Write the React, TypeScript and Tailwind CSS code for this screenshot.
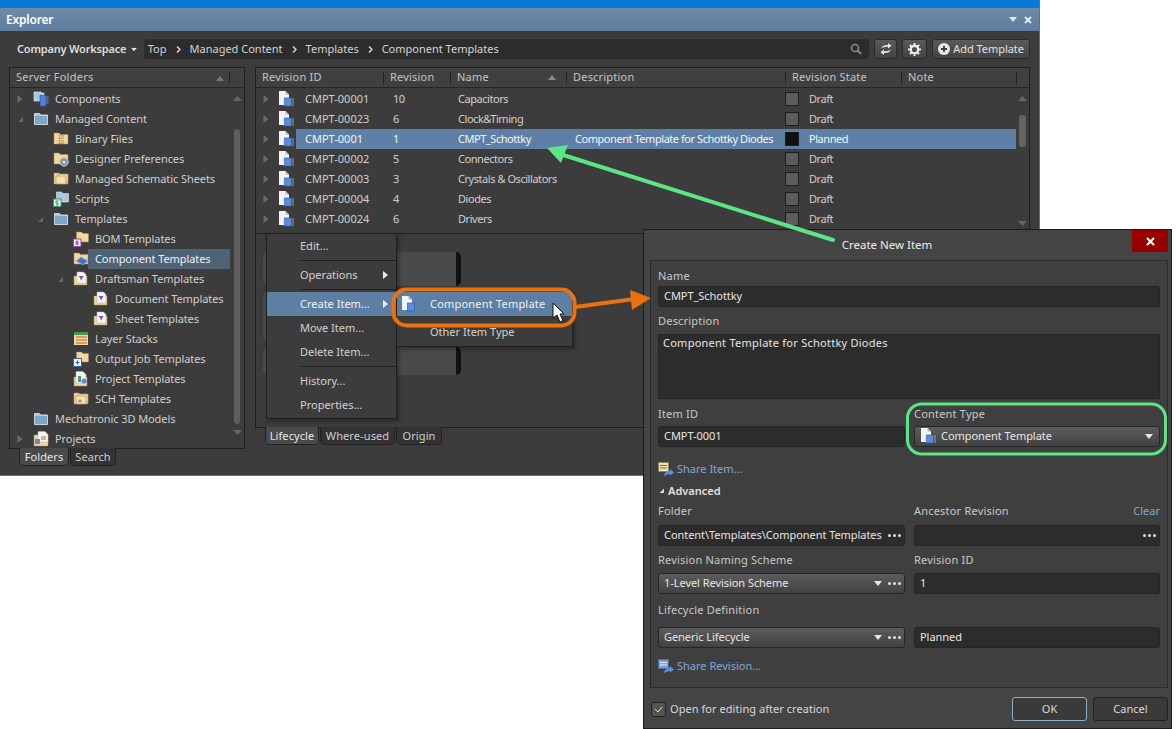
import type { ReactNode } from "react";

/* ================= ICONS ================= */

function DocChip({ small = false }: { small?: boolean }) {
  return (
    <svg width="16" height="17" viewBox="0 0 16 17" className="shrink-0">
      <path d="M1 0h6.500L11 3.500V14H1z" fill="#f2f4f6" />
      <path d="M7.500 0v3.500H11z" fill="#aeb6bf" />
      <rect x="6.500" y="7" width="7" height="8" fill="#5b8be0" stroke="#2f5db0" strokeWidth="0.7" />
      {!small && <path d="M14 8h2M14 10h2M14 12h2M14 14h2M5 8h1.500M5 10h1.500M5 12h1.500M5 14h1.500" stroke="#b9c7dd" strokeWidth="0.7" />}
    </svg>
  );
}

function TanFolder({ children }: { children?: ReactNode }) {
  return (
    <svg width="16" height="16" viewBox="0 0 16 16" className="shrink-0">
      <path d="M1 2h5l1.500 1.500H15V13H1z" fill="#f0d79e" stroke="#a88b52" strokeWidth="0.5" />
      {children}
    </svg>
  );
}

function BlueFolder() {
  return (
    <svg width="16" height="16" viewBox="0 0 16 16" className="shrink-0">
      <path d="M1.500 2.500h5L8 4h6.500v9.500h-13z" fill="#a9c6dc" stroke="#dfe9f1" strokeWidth="0.8" />
      <path d="M2 5h12v8H2z" fill="#7ea7c6" />
    </svg>
  );
}

function TreeIcon({ kind }: { kind: string }) {
  if (kind === "blue") return <BlueFolder />;
  if (kind === "components")
    return (
      <svg width="16" height="16" viewBox="0 0 16 16" className="shrink-0">
        <path d="M1 1h7l1 1h2v8H1z" fill="#a9c6dc" stroke="#dfe9f1" strokeWidth="0.6" />
        <rect x="7" y="4.500" width="6" height="10.500" fill="#4f7fe0" stroke="#2b57aa" strokeWidth="0.7" />
        <path d="M13.500 6h2M13.500 8h2M13.500 10h2M13.500 12h2" stroke="#b5c2d6" strokeWidth="0.7" />
      </svg>
    );
  if (kind === "binary")
    return (
      <TanFolder>
        <text x="8" y="7.500" fontSize="5" fontFamily="Liberation Sans" fill="#8a6a2d" textAnchor="middle">10</text>
        <text x="8" y="12.500" fontSize="5" fontFamily="Liberation Sans" fill="#8a6a2d" textAnchor="middle">10</text>
      </TanFolder>
    );
  if (kind === "prefs")
    return (
      <TanFolder>
        <circle cx="11" cy="11" r="4.200" fill="#8a8f94" stroke="#c7ccd0" strokeWidth="1" />
        <circle cx="11" cy="11" r="1.600" fill="#d8dcdf" />
      </TanFolder>
    );
  if (kind === "sheets" || kind === "sch")
    return (
      <TanFolder>
        <path d="M5 3h10v8H5z" fill="#f5dfae" stroke="#a88b52" strokeWidth="0.6" />
        <path d="M3 5h10v8H3z" fill="#f5dfae" stroke="#a88b52" strokeWidth="0.6" />
        {kind === "sch" && <path d="M5 11l2-3 2 3z" fill="#6b83c4" />}
      </TanFolder>
    );
  if (kind === "scripts")
    return (
      <svg width="16" height="16" viewBox="0 0 16 16" className="shrink-0">
        <path d="M3.500 1h5L10 2.500h5.500V11h-12z" fill="#a9c6dc" stroke="#dfe9f1" strokeWidth="0.6" />
        <rect x="0.500" y="8" width="7.500" height="7.500" fill="#f5f7f5" stroke="#2f9a63" strokeWidth="1" />
        <path d="M5.800 10H3v2h2v2H2.500" fill="none" stroke="#2f8a5a" strokeWidth="1" />
      </svg>
    );
  if (kind === "bom")
    return (
      <svg width="16" height="16" viewBox="0 0 16 16" className="shrink-0">
        <path d="M3.500 1h5L10 2.500h5.500V11h-12z" fill="#f0d79e" stroke="#a88b52" strokeWidth="0.5" />
        <rect x="0.500" y="8" width="7.500" height="7.500" fill="#f7f3fa" stroke="#9a3fb0" strokeWidth="1" />
        <path d="M3 10v3.500h2V12H3h2v-2z" fill="none" stroke="#8a3aa2" strokeWidth="0.8" />
      </svg>
    );
  if (kind === "comp")
    return (
      <TanFolder>
        <path d="M3 10l5-4 7 4-5 4z" fill="#4f7fd0" stroke="#86a6dd" strokeWidth="0.5" />
        <path d="M6 10h6M8 8l3 4" stroke="#2d5aa5" strokeWidth="0.6" />
      </TanFolder>
    );
  if (kind === "draft")
    return (
      <svg width="16" height="16" viewBox="0 0 16 16" className="shrink-0">
        <path d="M1 5h13v9H1z" fill="#f0d79e" stroke="#a88b52" strokeWidth="0.5" />
        <path d="M4 1h6.500L13 3.500V12H4z" fill="#f4f5f7" stroke="#b0b5bb" strokeWidth="0.5" />
        <path d="M5.500 5h5l-2.500 4.500-1-2.500z" fill="#8a4bb5" />
      </svg>
    );
  if (kind === "layers")
    return (
      <svg width="16" height="16" viewBox="0 0 16 16" className="shrink-0">
        <path d="M1 1h14v13H1z" fill="#f0d79e" />
        <path d="M1 1h14v3H1z" fill="#3e9a4e" />
        <path d="M3 6h11M3 9h11M3 12h11" stroke="#c2612e" strokeWidth="1" />
      </svg>
    );
  if (kind === "job")
    return (
      <svg width="16" height="16" viewBox="0 0 16 16" className="shrink-0">
        <path d="M3.500 1h5L10 2.500h5.500V11h-12z" fill="#f0d79e" stroke="#a88b52" strokeWidth="0.5" />
        <rect x="0.500" y="7.500" width="8" height="8" fill="#f5f7fb" stroke="#2c62c0" strokeWidth="1" />
        <path d="M4.500 9.500v4M2.500 11.500h4" stroke="#2c62c0" strokeWidth="1.200" />
      </svg>
    );
  if (kind === "project")
    return (
      <svg width="16" height="16" viewBox="0 0 16 16" className="shrink-0">
        <path d="M1 6h13v9H1z" fill="#f0d79e" stroke="#a88b52" strokeWidth="0.5" />
        <path d="M3 0.500h7L13 3.500V12H3z" fill="#f4f5f7" stroke="#b0b5bb" strokeWidth="0.5" />
        <path d="M5 5h3v6H5z" fill="#4f9a6a" />
        <circle cx="11" cy="10" r="2.500" fill="#5b8be0" />
      </svg>
    );
  return (
    <svg width="17" height="16" viewBox="0 0 17 16" className="shrink-0">
      <path d="M1 4h14v11H1z" fill="#f0d79e" stroke="#a88b52" strokeWidth="0.5" />
      <path d="M5 0.500h7L15 3.500V11H5z" fill="#f4f5f7" stroke="#b0b5bb" strokeWidth="0.5" />
      <rect x="2" y="8" width="5" height="5" fill="#5b8be0" />
      <path d="M8 6h5M8 8h5" stroke="#c2612e" strokeWidth="1" />
    </svg>
  );
}

function Arrow({ open }: { open?: boolean }) {
  return open ? (
    <svg width="10" height="10" viewBox="0 0 10 10"><path d="M8 3v5H3z" fill="#666" /></svg>
  ) : (
    <svg width="10" height="10" viewBox="0 0 10 10"><path d="M2.500 1l5 4-5 4z" fill="#6a6a6a" /></svg>
  );
}

function Dots() {
  return <span className="flex gap-[2px] shrink-0">
    <i className="w-[3px] h-[3px] rounded-full bg-[#e0e0e0]" />
    <i className="w-[3px] h-[3px] rounded-full bg-[#e0e0e0]" />
    <i className="w-[3px] h-[3px] rounded-full bg-[#e0e0e0]" />
  </span>;
}

function Caret({ className = "" }: { className?: string }) {
  return <svg width="8" height="5" viewBox="0 0 8 5" className={className}><path d="M0 0h8L4 5z" fill="#e6e6e6" /></svg>;
}

function Crumb() {
  return <svg width="5" height="7" viewBox="0 0 5 7" className="mx-[9px]"><path d="M1 0.500L4 3.500L1 6.500" fill="none" stroke="#d8d8d8" strokeWidth="1.500" /></svg>;
}

/* ================= EXPLORER ================= */

const indent = ["ml-[5px]", "ml-[25px]", "ml-[45px]", "ml-[65px]"];

const tree = [
  { label: "Components", level: 0, icon: "components", arrow: "closed" },
  { label: "Managed Content", level: 0, icon: "blue", arrow: "open" },
  { label: "Binary Files", level: 1, icon: "binary" },
  { label: "Designer Preferences", level: 1, icon: "prefs" },
  { label: "Managed Schematic Sheets", level: 1, icon: "sheets" },
  { label: "Scripts", level: 1, icon: "scripts" },
  { label: "Templates", level: 1, icon: "blue", arrow: "open" },
  { label: "BOM Templates", level: 2, icon: "bom" },
  { label: "Component Templates", level: 2, icon: "comp", selected: true },
  { label: "Draftsman Templates", level: 2, icon: "draft", arrow: "open" },
  { label: "Document Templates", level: 3, icon: "draft" },
  { label: "Sheet Templates", level: 3, icon: "draft" },
  { label: "Layer Stacks", level: 2, icon: "layers" },
  { label: "Output Job Templates", level: 2, icon: "job" },
  { label: "Project Templates", level: 2, icon: "project" },
  { label: "SCH Templates", level: 2, icon: "sch" },
  { label: "Mechatronic 3D Models", level: 0, icon: "blue" },
  { label: "Projects", level: 0, icon: "projects", arrow: "closed" },
];

const revisions = [
  ["CMPT-00001", "10", "Capacitors", "", "Draft"],
  ["CMPT-00023", "6", "Clock&Timing", "", "Draft"],
  ["CMPT-0001", "1", "CMPT_Schottky", "Component Template for Schottky Diodes", "Planned"],
  ["CMPT-00002", "5", "Connectors", "", "Draft"],
  ["CMPT-00003", "3", "Crystals & Oscillators", "", "Draft"],
  ["CMPT-00004", "4", "Diodes", "", "Draft"],
  ["CMPT-00024", "6", "Drivers", "", "Draft"],
];

function Tab({ children, active, className = "" }: { children: ReactNode; active?: boolean; className?: string }) {
  return (
    <div className={`h-[18px] pt-[2px] flex items-center justify-center rounded-b-[5px] border border-t-0 border-[#222] ${active ? "bg-[#4a4a4a] text-[#e8e8e8]" : "bg-[#333] text-[#cfcfcf]"} ${className}`}>
      {children}
    </div>
  );
}

function ToolButton({ children, className = "" }: { children: ReactNode; className?: string }) {
  return (
    <div className={`h-[20px] flex items-center justify-center rounded-[3px] border border-[#2a2a2a] bg-gradient-to-b from-[#5a5a5a] to-[#424242] text-[#e4e4e4] ${className}`}>
      {children}
    </div>
  );
}

function ServerFolders() {
  return (
    <div className="w-[236px] flex flex-col">
      <div className="h-[382px] border border-[#1f1f1f] flex flex-col">
        <div className="h-[20px] shrink-0 flex items-center pl-[6px] border-b border-[#262626] bg-[#404040] text-[#c4c4c4] relative tracking-[0.25px]">
          Server Folders
          <svg width="8" height="5" viewBox="0 0 8 5" className="absolute left-[206px] top-[8px]"><path d="M0 5h8L4 0z" fill="#777" /></svg>
          <span className="absolute left-[219px] top-[4px] w-px h-[11px] bg-[#222]" />
        </div>
        <div className="flex flex-1 pt-[1px]">
          <div className="w-[220px]">
            {tree.map((row) => (
              <div key={row.label} className="h-5 flex items-center">
                <span className={`w-[10px] shrink-0 flex ${indent[row.level]}`}>
                  {row.arrow && <Arrow open={row.arrow === "open"} />}
                </span>
                <span className="ml-[8px] w-[16px] shrink-0 flex"><TreeIcon kind={row.icon} /></span>
                <span className={`flex-1 h-5 flex items-center tracking-[-0.08px] ${row.selected ? "bg-[#4f6377] -ml-[1px] pl-[7px] text-[#eef1f4]" : "pl-[6px] text-[#cfcfcf]"}`}>
                  {row.label}
                </span>
              </div>
            ))}
          </div>
          <div className="flex-1 flex flex-col items-center relative">
            <svg width="9" height="5" viewBox="0 0 9 5" className="mt-[7px]"><path d="M0 5h9L4.500 0z" fill="#666" /></svg>
            <div className="w-[6px] h-[295px] mt-[28px] rounded-[3px] bg-[#5e5e5e]" />
            <svg width="9" height="5" viewBox="0 0 9 5" className="mt-[6px]"><path d="M0 0h9L4.500 5z" fill="#666" /></svg>
          </div>
        </div>
      </div>
      <div className="flex pl-[10px] -mt-px gap-px">
        <Tab active className="w-[50px]">Folders</Tab>
        <Tab className="w-[46px]">Search</Tab>
      </div>
    </div>
  );
}

function RevisionTable() {
  const head = [
    ["Revision ID", "w-[128px]"],
    ["Revision", "w-[67px]"],
    ["Name", "w-[116px]"],
    ["Description", "w-[219px]"],
    ["Revision State", "w-[116px]"],
    ["Note", "w-[115px]"],
  ];
  return (
    <div className="h-[167px] border border-[#1f1f1f] flex flex-col overflow-hidden">
      <div className="h-[20px] shrink-0 flex items-center border-b border-[#262626] bg-[#404040] text-[#c4c4c4] tracking-[0.2px]">
        {head.map(([label, width]) => (
          <div key={label} className={`${width} h-[12px] flex items-center pl-[6px] border-r border-[#222] relative`}>
            {label}
            {label === "Name" && <svg width="8" height="5" viewBox="0 0 8 5" className="absolute left-[97px] top-[3px]"><path d="M0 5h8L4 0z" fill="#8a8a8a" /></svg>}
          </div>
        ))}
      </div>
      <div className="flex flex-1 pt-[1px]">
        <div className="w-[760px] shrink-0">
          {revisions.map(([id, rev, name, desc, state]) => {
            const sel = state === "Planned";
            return (
              <div key={id} className="h-5 flex items-center">
                <span className="ml-[5px] w-[10px] flex"><Arrow /></span>
                <span className="ml-[7px] w-[16px] flex"><DocChip /></span>
                <div className={`ml-[2px] flex-1 h-5 flex items-center tracking-[-0.45px] ${sel ? "bg-[#5f80a6] text-[#f2f4f7]" : "text-[#d0d0d0]"}`}>
                  <span className="w-[87px] pl-[9px] tracking-[0px]">{id}</span>
                  <span className="w-[67px] pl-[10px]">{rev}</span>
                  <span className="w-[116px] pl-[8px]">{name}</span>
                  <span className="w-[219px] pl-[9px] whitespace-nowrap">{desc}</span>
                  <span className={`w-[14px] h-[14px] border border-[#1b1b1b] ${sel ? "bg-[#101010]" : "bg-[#5c5c5c]"}`} />
                  <span className="ml-[10px]">{state}</span>
                </div>
              </div>
            );
          })}
        </div>
        <div className="flex-1 flex flex-col items-center">
          <svg width="9" height="5" viewBox="0 0 9 5" className="mt-[7px]"><path d="M0 5h9L4.500 0z" fill="#666" /></svg>
          <div className="w-[7px] h-[32px] mt-[14px] rounded-[3px] bg-[#636363]" />
          <svg width="9" height="5" viewBox="0 0 9 5" className="mt-[74px]"><path d="M0 0h9L4.500 5z" fill="#666" /></svg>
        </div>
      </div>
    </div>
  );
}

function LifecyclePane() {
  return (
    <div className="flex flex-col">
      <div className="h-[194px] border border-t-0 border-[#1f1f1f] pl-[7px] pt-[18px] flex flex-col gap-[5px]">
        <div className="w-[198px] h-[34px] rounded-[5px] bg-[#4a4a4a] border-r-[5px] border-[#111]" />
        <div className="w-[198px] h-[51px] rounded-[5px] bg-[#4a4a4a]" />
        <div className="w-[198px] h-[28px] rounded-[5px] bg-[#4a4a4a] border-r-[5px] border-[#111]" />
      </div>
      <div className="flex pl-[10px] -mt-px gap-px">
        <Tab active className="w-[54px]">Lifecycle</Tab>
        <Tab className="w-[75px]">Where-used</Tab>
        <Tab className="w-[46px]">Origin</Tab>
      </div>
    </div>
  );
}

function Explorer() {
  return (
    <div className="absolute left-0 top-0 w-[1040px] h-[476px] flex flex-col border-r border-b border-[#2f7fc0] tracking-[0.1px]">
      <div className="h-2 bg-[#0a78d6] shrink-0" />
      <div className="h-[23px] shrink-0 flex items-center justify-between pl-[6px] pr-[7px] bg-gradient-to-b from-[#6d8aa9] to-[#5d7d9f] text-white font-semibold text-[12px] tracking-[-0.2px]">
        Explorer
        <div className="flex items-center gap-[7px]">
          <Caret />
          <svg width="8" height="8" viewBox="0 0 8 8"><path d="M1 1l6 6M7 1l-6 6" stroke="#e8eef4" strokeWidth="1.800" /></svg>
        </div>
      </div>
      <div className="flex-1 bg-[#3c3c3c] px-[9px] pt-[8px] flex flex-col gap-[8px]">
        <div className="h-[20px] flex items-center shrink-0">
          <span className="w-[121px] pl-[8px] font-semibold text-[#dedede] whitespace-nowrap tracking-[-0.2px]">Company Workspace</span>
          <Caret className="scale-75" />
          <div className="ml-[6px] w-[727px] h-[20px] flex items-center justify-between rounded-[3px] bg-[#2c2c2c] pl-[4px] pr-[7px] text-[#d4d4d4]">
            <div className="flex items-center tracking-[0px]">
              <span>Top</span><Crumb />
              <span>Managed Content</span><Crumb />
              <span>Templates</span><Crumb />
              <span>Component Templates</span>
            </div>
            <svg width="12" height="12" viewBox="0 0 12 12"><circle cx="5" cy="5" r="3.500" fill="none" stroke="#8a8a8a" strokeWidth="1.500" /><path d="M7.500 7.500l3.500 3.500" stroke="#8a8a8a" strokeWidth="2" /></svg>
          </div>
          <ToolButton className="ml-[5px] w-[23px]">
            <svg width="12" height="14" viewBox="0 0 12 14"><path d="M1.500 6.500C2 3.500 5 3 8 3V1l3.500 2.800L8 6.500V4.800C5.500 4.800 3.500 5 1.500 6.500zM10.500 7.500C10 10.500 7 11 4 11v2L0.500 10.200 4 7.500v1.700C6.500 9.200 8.500 9 10.500 7.500z" fill="#e6e6e6" /></svg>
          </ToolButton>
          <ToolButton className="ml-[5px] w-[25px]">
            <svg width="13" height="13" viewBox="0 0 13 13"><circle cx="6.500" cy="6.500" r="3.700" fill="none" stroke="#ececec" strokeWidth="2.300" /><path d="M6.500 0v2.500M6.500 10.500V13M0 6.500h2.500M10.500 6.500H13M1.900 1.900l1.800 1.800M9.300 9.300l1.800 1.800M11.100 1.900L9.300 3.700M3.700 9.300l-1.800 1.800" stroke="#ececec" strokeWidth="2" /></svg>
          </ToolButton>
          <ToolButton className="ml-[5px] w-[98px] gap-[3px]">
            <svg width="12" height="12" viewBox="0 0 12 12"><circle cx="6" cy="6" r="6" fill="#e8e8e8" /><path d="M6 3v6M3 6h6" stroke="#3c3c3c" strokeWidth="1.800" /></svg>
            <span className="tracking-[-0.05px]">Add Template</span>
          </ToolButton>
        </div>
        <div className="flex gap-[10px]">
          <ServerFolders />
          <div className="w-[775px] flex flex-col">
            <RevisionTable />
            <LifecyclePane />
          </div>
        </div>
      </div>
    </div>
  );
}

/* ================= CONTEXT MENU ================= */

function MenuItem({ label, sub, active }: { label: string; sub?: boolean; active?: boolean }) {
  return (
    <div className={`h-[24px] flex items-center justify-between pl-[33px] pr-[8px] ${active ? "bg-[#5d7fa3] text-[#f0f3f6]" : "text-[#d2d2d2]"}`}>
      {label}
      {sub && <svg width="5" height="8" viewBox="0 0 5 8"><path d="M0 0l5 4-5 4z" fill="#eee" /></svg>}
    </div>
  );
}

function Sep() {
  return <div className="h-px ml-[34px] bg-[#1f1f1f] my-[2px]" />;
}

function ContextMenu() {
  return (
    <>
      <div className="absolute left-[266px] top-[233px] w-[131px] h-[186px] bg-[#3c3c3c] border border-[#1f1f1f] tracking-[0px] shadow-[2px_2px_4px_rgba(0,0,0,0.35)]">
        <MenuItem label="Edit..." />
        <Sep />
        <MenuItem label="Operations" sub />
        <Sep />
        <MenuItem label="Create Item..." sub active />
        <MenuItem label="Move Item..." />
        <MenuItem label="Delete Item..." />
        <Sep />
        <MenuItem label="History..." />
        <MenuItem label="Properties..." />
      </div>
      <div className="absolute left-[396px] top-[291px] w-[177px] h-[56px] bg-[#3c3c3c] border border-[#1f1f1f] tracking-[0px] shadow-[2px_2px_4px_rgba(0,0,0,0.35)]">
        <div className="h-[24px] flex items-center bg-[#5d7fa3] text-[#f0f3f6] pl-[4px]">
          <DocChip small />
          <span className="ml-[13px] tracking-[0.2px]">Component Template</span>
        </div>
        <div className="h-[30px] pt-[3px] flex items-center pl-[33px] text-[#d2d2d2]">Other Item Type</div>
      </div>
    </>
  );
}

/* ================= DIALOG ================= */

function Label({ children, className = "" }: { children: ReactNode; className?: string }) {
  return <div className={`text-[#c9c9c9] leading-[14px] tracking-[0.2px] ${className}`}>{children}</div>;
}

function Field({ children, className = "", select }: { children?: ReactNode; className?: string; select?: boolean }) {
  return (
    <div className={`h-[21px] flex items-center justify-between rounded-[3px] pl-[5px] pr-[3px] text-[#e6e6e6] tracking-[-0.05px] border border-[#262626] ${select ? "bg-gradient-to-b from-[#5c5c5c] to-[#424242]" : "bg-[#2c2c2c]"} ${className}`}>
      {children}
    </div>
  );
}

function SelectEnd() {
  return (
    <span className="flex items-center gap-[6px]">
      <Caret />
      <Dots />
    </span>
  );
}

function ShareIcon({ grid }: { grid?: boolean }) {
  return (
    <svg width="16" height="15" viewBox="0 0 16 15" className="shrink-0">
      <rect x="0.500" y="0.500" width="10" height="9" fill={grid ? "#7d9fd8" : "#f0e3b8"} stroke={grid ? "#4a6eb0" : "#8a7a4f"} strokeWidth="0.6" />
      <path d="M2 3.500h7M2 6h7" stroke={grid ? "#e8eefa" : "#7a6a3f"} strokeWidth="1" />
      <path d="M6 14c0-3 3-5 6-5V7l4 3.500-4 3V12c-2 0-4 1-6 2z" fill="#5a93dc" />
    </svg>
  );
}

function CreateDialog() {
  return (
    <div className="absolute left-[643px] top-[229px] w-[529px] h-[500px] bg-[#444444] border border-[#1c1c1c] flex flex-col">
      <div className="h-[30px] shrink-0 relative flex justify-center items-center pr-[41px] text-[#ececec] text-[11.5px] tracking-[0px]">
        Create New Item
        <div className="absolute left-[488px] top-[0px] w-[36px] h-[22px] bg-[#980000] flex items-center justify-center">
          <svg width="9" height="9" viewBox="0 0 9 9"><path d="M1 1l7 7M8 1l-7 7" stroke="#fff" strokeWidth="2" /></svg>
        </div>
      </div>
      <div className="mx-[6px] w-[518px] h-[428px] shrink-0 bg-[#3f3f3f] border border-[#2b2b2b] px-[7px] pt-[8px] flex flex-col">
        <Label>Name</Label>
        <Field className="mt-[3px]">CMPT_Schottky</Field>
        <Label className="mt-[7px]">Description</Label>
        <div className="mt-[6px] h-[65px] shrink-0 bg-[#2c2c2c] border border-[#262626] pl-[4px] pt-[1px] leading-[14px] tracking-[0.25px] text-[#e6e6e6]">Component Template for Schottky Diodes</div>
        <div className="mt-[8px] grid grid-cols-[247px_246px] gap-x-[9px]">
          <Label>Item ID</Label>
          <Label>Content Type</Label>
          <Field className="mt-[5px]">CMPT-0001</Field>
          <Field select className="mt-[5px] pr-[6px]">
            <span className="flex items-center gap-[5px]"><DocChip />Component Template</span>
            <Caret />
          </Field>
        </div>
        <div className="mt-[14px] h-[16px] flex items-center gap-[3px] text-[#7fa8d6]"><ShareIcon />Share Item...</div>
        <div className="mt-[7px] h-[14px] flex items-center gap-[3px] font-semibold text-[#e0e0e0]">
          <svg width="6" height="6" viewBox="0 0 6 6" className="ml-[1px]"><path d="M5 0.500V5H0.500z" fill="#ddd" /></svg>
          Advanced
        </div>
        <div className="mt-[6px] grid grid-cols-[247px_246px] gap-x-[9px]">
          <Label>Folder</Label>
          <div className="flex justify-between">
            <Label>Ancestor Revision</Label>
            <span className="text-[#7fa8d6] leading-[14px]">Clear</span>
          </div>
          <Field className="mt-[7px]"><span className="whitespace-nowrap">Content\Templates\Component Templates</span><Dots /></Field>
          <Field className="mt-[7px] justify-end"><Dots /></Field>
          <Label className="mt-[7px]">Revision Naming Scheme</Label>
          <Label className="mt-[7px]">Revision ID</Label>
          <Field select className="mt-[6px]">1-Level Revision Scheme<SelectEnd /></Field>
          <Field className="mt-[6px]">1</Field>
          <Label className="mt-[9px] col-span-2">Lifecycle Definition</Label>
          <Field select className="mt-[10px]">Generic Lifecycle<SelectEnd /></Field>
          <Field className="mt-[10px]">Planned</Field>
        </div>
        <div className="mt-[10px] h-[16px] flex items-center gap-[3px] text-[#7fa8d6]"><ShareIcon grid />Share Revision...</div>
      </div>
      <div className="flex items-center pl-[7px] pr-[3px] pt-[9px] text-[#d8d8d8] tracking-[0.05px]">
        <span className="w-[15px] h-[15px] rounded-[3px] border border-[#222] bg-[#555] flex items-center justify-center">
          <svg width="9" height="7" viewBox="0 0 9 7"><path d="M1 3l3 3 4-5" fill="none" stroke="#e4e4e4" strokeWidth="1" /></svg>
        </span>
        <span className="ml-[4px]">Open for editing after creation</span>
        <div className="ml-auto w-[75px] h-[24px] rounded-[3px] border border-[#8eb0c8] bg-[#3a3a3a] flex items-center justify-center">OK</div>
        <div className="ml-[6px] w-[75px] h-[24px] rounded-[3px] border border-[#222] bg-[#3a3a3a] flex items-center justify-center">Cancel</div>
      </div>
    </div>
  );
}

/* ================= ANNOTATIONS ================= */

function Annotations() {
  return (
    <svg width="1176" height="729" viewBox="0 0 1176 729" className="absolute left-0 top-0 pointer-events-none">
      <path d="M833 240L560 154" stroke="#5be584" strokeWidth="4" strokeLinecap="round" />
      <path d="M547 148L568 145L561 163z" fill="#5be584" />
      <rect x="907.500" y="404" width="258" height="50" rx="14" fill="none" stroke="#5be584" strokeWidth="3" />
      <rect x="393.500" y="289.500" width="181" height="36" rx="13" fill="none" stroke="#e9720f" strokeWidth="4" />
      <path d="M575 307L634 299" stroke="#e9720f" strokeWidth="4" />
      <path d="M651 298L630 290L632 310z" fill="#e9720f" />
      <path d="M553 303V318L557 315L560 322L563 320.500L560 314H564z" fill="#fff" stroke="#111" strokeWidth="1" />
    </svg>
  );
}

export default function App() {
  return (
    <div className="relative w-[1176px] h-[729px] overflow-hidden bg-white text-[11px] font-['Noto_Sans','Open_Sans',sans-serif]">
      <Explorer />
      <ContextMenu />
      <CreateDialog />
      <Annotations />
    </div>
  );
}
